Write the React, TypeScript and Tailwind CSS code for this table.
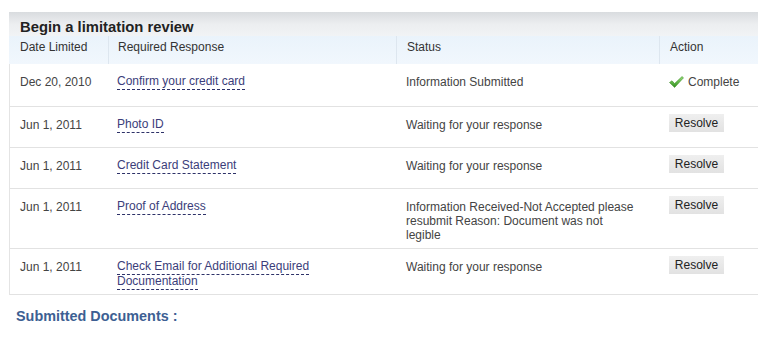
import React from "react";

type Row = {
  date: string;
  response: string[];
  status: string[];
  done?: boolean;
  h: string;
};

const rows: Row[] = [
  { date: "Dec 20, 2010", response: ["Confirm your credit card"], status: ["Information Submitted"], done: true, h: "h-[43px]" },
  { date: "Jun 1, 2011", response: ["Photo ID"], status: ["Waiting for your response"], h: "h-[41px]" },
  { date: "Jun 1, 2011", response: ["Credit Card Statement"], status: ["Waiting for your response"], h: "h-[41px]" },
  {
    date: "Jun 1, 2011",
    response: ["Proof of Address"],
    status: ["Information Received-Not Accepted please", "resubmit Reason: Document was not", "legible"],
    h: "h-[60px]",
  },
  {
    date: "Jun 1, 2011",
    response: ["Check Email for Additional Required", "Documentation"],
    status: ["Waiting for your response"],
    h: "h-[46px]",
  },
];

const headCols = "grid grid-cols-[99px_288px_263px_99px]";
// rows carry a 1px left border, so the first column is one pixel narrower
const rowCols = "grid grid-cols-[98px_288px_263px_99px]";

const Check = () => (
  <svg width="15" height="12" viewBox="0 0 15 12" className="shrink-0">
    <defs>
      <linearGradient id="chk" x1="0" y1="0" x2="0" y2="1">
        <stop offset="0" stopColor="#9be07a" />
        <stop offset="1" stopColor="#2f8f1c" />
      </linearGradient>
    </defs>
    <path d="M0.5 6.5 L3 4.8 L5.6 7.6 L13 0.6 L14.5 1.8 L5.6 11.4 Z" fill="url(#chk)" stroke="#3a8f26" strokeWidth="0.6" />
  </svg>
);

const LinkText = ({ lines }: { lines: string[] }) => (
  <div className="flex flex-col items-start">
    {lines.map((l, i) => (
      <span key={i} className="text-[#3b3d7a] border-b border-dashed border-[#2d3168] leading-[13px] pb-[1px]">
        {l}
      </span>
    ))}
  </div>
);

export default function App() {
  return (
    <div className="w-[766px] h-[350px] bg-white font-['Liberation_Sans',Arial,sans-serif] text-[12px] text-[#333]">
      <div className="pt-[12px] pl-[9px] w-[758px]">
        <div className="h-[24px] bg-gradient-to-b from-[#d9dcdf] via-[#eceef0] to-[#f1f3f5] pl-[11px] pt-[7px] text-[14.8px] font-bold text-[#222] leading-[16px]">
          Begin a limitation review
        </div>
        <div className={`${headCols} h-[28px] bg-gradient-to-b from-[#eaf3fb] to-[#f1f7fd] leading-[14px]`}>
          <div className="pl-[11px] pt-[4px]">Date Limited</div>
          <div className="pl-[9px] pt-[4px] border-l border-[#dde6ef]">Required Response</div>
          <div className="pl-[10px] pt-[4px] border-l border-[#dde6ef]">Status</div>
          <div className="pl-[10px] pt-[4px] border-l border-[#dde6ef]">Action</div>
        </div>
        <div className="border-l border-[#e4e4e4]">
          {rows.map((r, i) => (
            <div key={i} className={`${rowCols} ${r.h} border-b border-[#e2e2e2] leading-[14px] text-[#444]`}>
              <div className="pl-[10px] pt-[11px]">{r.date}</div>
              <div className="pl-[9px] pt-[11px]">
                <LinkText lines={r.response} />
              </div>
              <div className="pl-[10px] pt-[11px]">
                {r.status.map((s, j) => (
                  <div key={j}>{s}</div>
                ))}
              </div>
              <div className="pl-[10px]">
                {r.done ? (
                  <div className="flex items-center gap-[4px] pt-[11px]">
                    <Check />
                    <span>Complete</span>
                  </div>
                ) : (
                  <div className="pt-[7px]">
                    <button className="h-[18px] w-[55px] bg-gradient-to-b from-[#efefef] to-[#e2e2e2] text-[12px] text-[#222] leading-[18px]">
                      Resolve
                    </button>
                  </div>
                )}
              </div>
            </div>
          ))}
        </div>
      </div>
      <div className="pl-[16px] pt-[13px] text-[14.4px] font-bold text-[#3d5f93] leading-[16px]">
        Submitted Documents :
      </div>
    </div>
  );
}
